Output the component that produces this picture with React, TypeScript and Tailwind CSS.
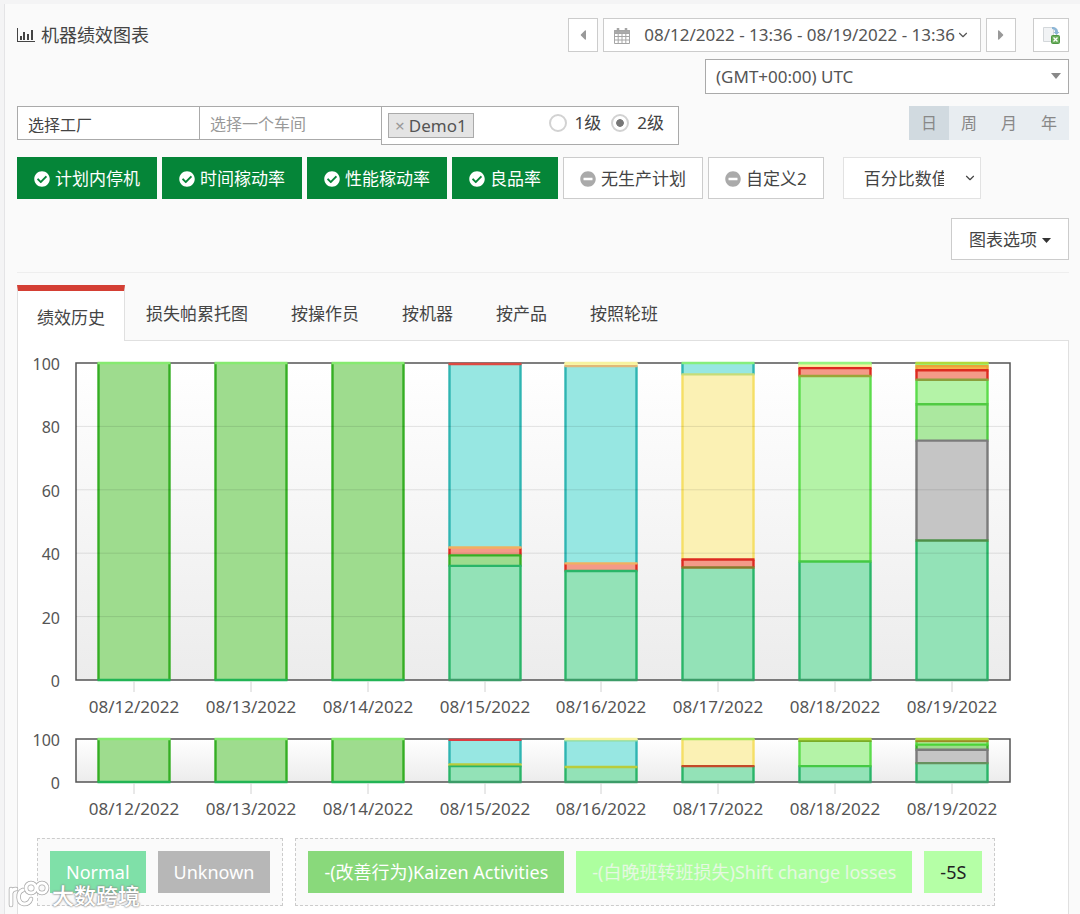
import type { ReactNode } from 'react'
import { FaCheckCircle, FaMinusCircle, FaCaretLeft, FaCaretRight } from 'react-icons/fa'
import { ChevronDown } from 'lucide-react'

type Segment = { to: number; fill: string; stroke: string; cap?: string }
type Day = { date: string; base: string; segments: Segment[]; overview: Segment[] }

const normal = { fill: '#93e2b7', stroke: '#2ab568' }
const kaizen = { fill: '#9edc8e', stroke: '#35ae24' }
const shift = { fill: '#b4f3a7', stroke: '#5cdc4c' }
const stop = { fill: '#f49a88', stroke: '#dd2a20' }
const setup = { fill: '#97e7e2', stroke: '#2fb5b2' }
const idle = { fill: '#fbf1b4', stroke: '#f5df66' }
const unknown = { fill: '#c5c5c5', stroke: '#7b7b7b' }
const lime = { fill: '#97f580', stroke: '#97f580' }
const cream = { fill: '#fdf6a8', stroke: '#f7f3a0' }
const orange = { fill: '#f5b34c', stroke: '#eba338' }

const fullDay = (date: string): Day => ({
  date,
  base: '#22b455',
  segments: [{ to: 100, ...kaizen, cap: '#86ea70' }],
  overview: [{ to: 100, ...kaizen, cap: '#86ea70' }],
})

const days: Day[] = [
  fullDay('08/12/2022'),
  fullDay('08/13/2022'),
  fullDay('08/14/2022'),
  {
    date: '08/15/2022',
    base: '#3c9c68',
    segments: [
      { to: 36, ...normal },
      { to: 39.3, ...kaizen },
      { to: 41.8, ...stop, cap: '#f0b060' },
      { to: 99.7, ...setup, cap: '#dd4a42' },
    ],
    overview: [
      { to: 37, ...normal },
      { to: 41, ...idle, cap: '#b9cc3c' },
      { to: 98, ...setup, cap: '#dd3c42' },
    ],
  },
  {
    date: '08/16/2022',
    base: '#3c9c68',
    segments: [
      { to: 34.4, ...normal },
      { to: 36.8, ...stop, cap: '#f0b060' },
      { to: 99, ...setup, cap: '#e0b878' },
      { to: 100, ...cream },
    ],
    overview: [
      { to: 35, ...normal, cap: '#b9cc3c' },
      { to: 97, ...setup, cap: '#8fdc9c' },
      { to: 100, ...cream },
    ],
  },
  {
    date: '08/17/2022',
    base: '#3c9c68',
    segments: [
      { to: 35.5, ...normal, cap: '#8a7a2c' },
      { to: 38, ...stop },
      { to: 96.4, ...idle, cap: '#c6dc78' },
      { to: 100, ...setup, cap: '#86ee7c' },
    ],
    overview: [
      { to: 37, ...normal, cap: '#c44a28' },
      { to: 100, ...idle, cap: '#a4e858' },
    ],
  },
  {
    date: '08/18/2022',
    base: '#3c9c68',
    segments: [
      { to: 37.4, ...normal, cap: '#45c944' },
      { to: 95.9, ...shift, cap: '#9aa538' },
      { to: 98.4, ...stop },
      { to: 99.2, ...cream },
      { to: 100, ...lime },
    ],
    overview: [
      { to: 37, ...normal, cap: '#45c944' },
      { to: 96, ...shift, cap: '#7aac28' },
      { to: 100, ...lime, cap: '#b3dc38' },
    ],
  },
  {
    date: '08/19/2022',
    base: '#3c9c68',
    segments: [
      { to: 44, ...normal, cap: '#4d9048' },
      { to: 75.5, ...unknown },
      { to: 87, fill: '#abe89f', stroke: '#50cb42' },
      { to: 94.7, ...shift, cap: '#8aa03c' },
      { to: 97.7, ...stop },
      { to: 99, ...orange },
      { to: 100, ...lime, cap: '#b2d93c' },
    ],
    overview: [
      { to: 44, ...normal, cap: '#66915e' },
      { to: 75, ...unknown },
      { to: 87, ...kaizen, cap: '#4bd336' },
      { to: 95, ...shift, cap: '#9a8c24' },
      { to: 100, ...lime, cap: '#b2d93c' },
    ],
  },
]

const PLOT_LEFT = 58
const PLOT_RIGHT = 992
const BAR_WIDTH = 71

const barCentre = (index: number) => Math.round(PLOT_LEFT + ((PLOT_RIGHT - PLOT_LEFT) / 8) * (index + 0.5))

function Bar({ day, index, height, overview }: { day: Day; index: number; height: number; overview: boolean }) {
  const left = barCentre(index) - BAR_WIDTH / 2
  const right = left + BAR_WIDTH
  const y = (value: number) => height - (value / 100) * height
  const segments = overview ? day.overview : day.segments

  return (
    <g strokeWidth={2.4}>
      {segments.map((segment, i) => {
        const bottom = y(i === 0 ? 0 : segments[i - 1].to)
        const top = y(segment.to)
        return (
          <g key={segment.to}>
            <rect x={left} y={top} width={BAR_WIDTH} height={bottom - top} fill={segment.fill} />
            <path d={`M${left} ${bottom}V${top}M${right} ${bottom}V${top}`} stroke={segment.stroke} />
          </g>
        )
      })}
      {segments.map((segment) => (
        <path key={segment.to} d={`M${left - 1} ${y(segment.to)}H${right + 1}`} stroke={segment.cap ?? segment.stroke} />
      ))}
      <path d={`M${left - 1} ${height}H${right + 1}`} stroke={day.base} />
    </g>
  )
}

function Plot({ top, height, ticks, overview = false }: { top: number; height: number; ticks: number[]; overview?: boolean }) {
  const y = (value: number) => height - (value / 100) * height
  return (
    <g transform={`translate(0 ${top})`}>
      <rect x={PLOT_LEFT} y={0} width={PLOT_RIGHT - PLOT_LEFT} height={height} fill="url(#plot-background)" />
      <rect x={PLOT_LEFT} y={0} width={PLOT_RIGHT - PLOT_LEFT} height={height} fill="none" stroke="#545454" strokeWidth={1.5} />
      {days.map((day, i) => (
        <g key={day.date}>
          <Bar day={day} index={i} height={height} overview={overview} />
          <path d={`M${barCentre(i)} ${height + 1}v11`} stroke="#d2d2d2" />
          <text x={barCentre(i)} y={height + 33} textAnchor="middle" className="text-[17px]">
            {day.date}
          </text>
        </g>
      ))}
      {ticks.map((tick) => (
        <g key={tick}>
          {tick > 0 && tick < 100 && <path d={`M${PLOT_LEFT} ${y(tick)}H${PLOT_RIGHT}`} stroke="#000" strokeOpacity={0.1} />}
          <text x={42} y={y(tick) + 7} textAnchor="end">
            {tick}
          </text>
        </g>
      ))}
    </g>
  )
}

function PerformanceChart() {
  return (
    <svg viewBox="0 0 1050 485" className="block w-full fill-[#555] text-base" role="img" aria-label="绩效历史">
      <defs>
        <linearGradient id="plot-background" x1="0" y1="0" x2="0" y2="1">
          <stop offset="0" stopColor="#fff" />
          <stop offset="1" stopColor="#ececec" />
        </linearGradient>
      </defs>
      <Plot top={22} height={317} ticks={[0, 20, 40, 60, 80, 100]} />
      <Plot top={398} height={43} ticks={[0, 100]} overview />
    </svg>
  )
}

function ChartIcon() {
  return (
    <svg viewBox="0 0 18 14" className="h-[14px] w-[18px]" fill="#444">
      <path d="M0 0h1v13h17v1H0z" />
      <path d="M3 8h2v4H3zM6 4h2v8H6zM10 6h2v6h-2zM14 2h2v10h-2z" />
    </svg>
  )
}

function CalendarIcon() {
  return (
    <svg viewBox="0 0 16 17" className="h-[17px] w-4" fill="none" stroke="#a5a5a5">
      <path d="M.5 3.5h15v13H.5z" fill="#fff" />
      <path d="M.5 3.5h15v3H.5z" fill="#aaa" />
      <path d="M4.2 6v10.5M8 6v10.5M11.8 6v10.5M1 9.5h14M1 13h14" />
      <path d="M4 1v3.5M12 1v3.5" strokeWidth="2.5" />
    </svg>
  )
}

function ExportIcon() {
  return (
    <svg viewBox="0 0 18 18" className="h-[18px] w-[18px]">
      <path d="M1.5 1.5h10v14h-10z" fill="#f1f3f5" stroke="#d3d7da" />
      <path d="M10 1c4 0 6 2 6 5h1.500L14.500 9 11.500 6H13c0-2-1-3-3-3z" fill="#8db6d6" />
      <rect x="9.5" y="9.5" width="8" height="8" rx="1" fill="#6aae5c" stroke="#4f9645" />
      <path d="M11.5 11.5l4 4M15.5 11.5l-4 4" stroke="#fff" strokeWidth="1.3" />
    </svg>
  )
}

function ToggleButton({ active = false, children }: { active?: boolean; children: ReactNode }) {
  return (
    <button
      className={
        active
          ? 'flex h-[42px] items-center gap-[5px] border border-[#058538] bg-[#058538] px-4 pt-0.5 text-white'
          : 'flex h-[42px] items-center gap-[5px] border border-[#ccc] bg-white px-4 pt-0.5 text-[#444]'
      }
    >
      {active ? <FaCheckCircle className="size-4" /> : <FaMinusCircle className="size-4 text-[#aaa]" />}
      {children}
    </button>
  )
}

function Watermark() {
  return (
    <div className="pointer-events-none absolute bottom-1 left-2 flex items-center gap-0.5">
      <svg viewBox="0 0 42 30" className="h-[30px] w-[42px]" fill="none" strokeLinecap="round">
        <g stroke="#aaa" strokeWidth="4.5">
          <path d="M3 9v16M3 13c1-3 3-4 5-4" />
          <path d="M15 10c-6 2-6 13 1 14 4 0 6-2 7-5" />
          <circle cx="23" cy="8" r="5" />
          <circle cx="34" cy="8" r="5" />
        </g>
        <g stroke="#fff" strokeWidth="3">
          <path d="M3 9v16M3 13c1-3 3-4 5-4" />
          <path d="M15 10c-6 2-6 13 1 14 4 0 6-2 7-5" />
          <circle cx="23" cy="8" r="5" />
          <circle cx="34" cy="8" r="5" />
        </g>
      </svg>
      <span className="text-[22px] leading-7 font-medium text-white [text-shadow:0_0_2px_#777,0_0_2px_#999]">大数跨境</span>
    </div>
  )
}

const tabs = ['损失帕累托图', '按操作员', '按机器', '按产品', '按照轮班']

export default function App() {
  return (
    <div className="relative flex min-h-screen flex-col bg-[#f4f4f5] pt-1 pl-1 font-['Noto_Sans','Noto_Sans_CJK_SC',sans-serif] text-[17px] leading-6 text-[#444]">
      <main className="flex flex-1 flex-col border-l border-[#e4e4e6] bg-[#fafafa] pt-3.5 pr-[11px] pl-3">
        <header className="flex h-[34px] items-center justify-between">
          <h1 className="flex items-center gap-1.5 text-[18px]">
            <ChartIcon />
            机器绩效图表
          </h1>
          <div className="flex h-full gap-[5px]">
            <button aria-label="上一期" className="flex w-[30px] items-center justify-center border border-[#ccc] bg-white text-[#999]">
              <FaCaretLeft className="size-4" />
            </button>
            <button className="flex items-center border border-[#ccc] bg-white pr-2.5 pl-2.5 text-[#555]">
              <CalendarIcon />
              <span className="ml-3.5">08/12/2022 - 13:36 - 08/19/2022 - 13:36</span>
              <ChevronDown className="ml-px size-3.5" />
            </button>
            <button aria-label="下一期" className="flex w-[30px] items-center justify-center border border-[#ccc] bg-white text-[#999]">
              <FaCaretRight className="size-4" />
            </button>
            <button aria-label="导出" className="ml-3 flex w-9 items-center justify-center border border-[#ccc] bg-white">
              <ExportIcon />
            </button>
          </div>
        </header>

        <div className="mt-[7px] flex justify-end">
          <div className="relative w-[364px]">
            <select aria-label="时区" className="h-[35px] w-full appearance-none border border-[#aaa] bg-white px-2.5 text-[17px] text-[#555]">
              <option>(GMT+00:00) UTC</option>
            </select>
            <svg viewBox="0 0 10 6" className="pointer-events-none absolute top-[14px] right-2 h-1.5 w-2.5" fill="#888">
              <path d="M0 0h10L5 6z" />
            </svg>
          </div>
        </div>

        <div className="mt-3 flex items-start justify-between">
          <div className="flex items-start text-base">
            <input
              aria-label="工厂"
              defaultValue="选择工厂"
              className="h-[34px] w-[183px] border border-[#aaa] bg-white px-2.5 pt-0.5"
            />
            <input
              aria-label="车间"
              placeholder="选择一个车间"
              className="-ml-px h-[34px] w-[182px] border border-r-0 border-[#aaa] bg-white px-2.5 pt-0.5 placeholder:text-[#999]"
            />
            <div className="flex h-[39px] w-[298px] items-start border border-[#aaa] bg-white pt-1.5 pr-3.5 pl-1.5">
              <span className="flex h-[25px] items-center border border-[#aaa] bg-[#e4e4e4] px-1.5 text-[17px] text-[#555]">
                <button aria-label="移除 Demo1" className="mr-1 text-[#999]">×</button>
                Demo1
              </span>
              <div className="ml-auto flex h-5 items-center gap-2.5 text-[17px]">
                <label className="flex items-center gap-2">
                  <input type="radio" name="level" className="size-[18px] appearance-none rounded-full border-2 border-[#d2d2d2] bg-white checked:bg-[radial-gradient(#777_35%,#fff_42%)]" />
                  1级
                </label>
                <label className="flex items-center gap-2">
                  <input type="radio" name="level" defaultChecked className="size-[18px] appearance-none rounded-full border-2 border-[#d2d2d2] bg-white checked:bg-[radial-gradient(#777_35%,#fff_42%)]" />
                  2级
                </label>
              </div>
            </div>
          </div>
          <div className="flex h-[34px] bg-[#e8edf1] text-base text-[#888]">
            <button className="w-10 bg-[#d1dae0]">日</button>
            <button className="w-10">周</button>
            <button className="w-10">月</button>
            <button className="w-10">年</button>
          </div>
        </div>

        <div className="mt-3 flex gap-[5px]">
          <ToggleButton active>计划内停机</ToggleButton>
          <ToggleButton active>时间稼动率</ToggleButton>
          <ToggleButton active>性能稼动率</ToggleButton>
          <ToggleButton active>良品率</ToggleButton>
          <ToggleButton>无生产计划</ToggleButton>
          <ToggleButton>自定义2</ToggleButton>
          <div className="relative ml-3.5">
            <select aria-label="数值类型" className="h-[42px] w-[138px] appearance-none border border-[#e2e2e2] bg-white pt-0.5 pr-9 pl-5">
              <option>百分比数值</option>
            </select>
            <ChevronDown className="pointer-events-none absolute top-3.5 right-1 size-3.5" />
          </div>
        </div>

        <div className="mt-[19px] flex justify-end">
          <button className="flex h-[42px] items-center gap-[5px] border border-[#ccc] bg-white px-[17px] pt-0.5">
            图表选项
            <svg viewBox="0 0 9 5" className="h-[5px] w-[9px]" fill="#333">
              <path d="M0 0h9L4.5 5z" />
            </svg>
          </button>
        </div>

        <nav className="mt-3 flex items-end border-t border-[#eee] pt-3">
          <button className="h-14 border-x border-t-[6px] border-[#e0e0e0] border-t-[#d43f34] bg-white px-[19px] pt-1">绩效历史</button>
          <div className="flex h-14 flex-1 items-center gap-[43px] border-b border-[#e0e0e0] pt-0.5 pl-[21px]">
            {tabs.map((tab) => (
              <button key={tab}>{tab}</button>
            ))}
          </div>
        </nav>

        <section className="flex-1 border-x border-[#e0e0e0] bg-white">
          <PerformanceChart />
          <div className="mt-3 flex gap-3 px-[19px] pb-[7px] text-[18px] text-white">
            <div className="flex gap-3 border border-dashed border-[#ccc] bg-[#fafafa] p-3">
              <button className="h-[42px] bg-[#7fe0a8] px-4">Normal</button>
              <button className="h-[42px] bg-[#b7b7b7] px-4">Unknown</button>
            </div>
            <div className="flex gap-3 border border-dashed border-[#ccc] bg-[#fafafa] p-3">
              <button className="h-[42px] bg-[#89d97b] px-4">-(改善行为)Kaizen Activities</button>
              <button className="h-[42px] bg-[#adff9f] px-4 text-[#e6f8e2]">-(白晚班转班损失)Shift change losses</button>
              <button className="h-[42px] bg-[#b5ffa6] px-4 text-[#222]">-5S</button>
            </div>
          </div>
        </section>
      </main>
      <Watermark />
    </div>
  )
}
